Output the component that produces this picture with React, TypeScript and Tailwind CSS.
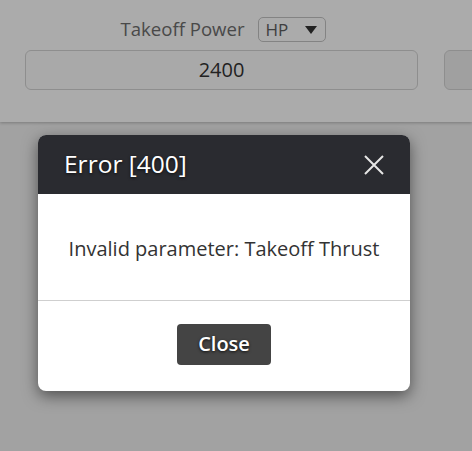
import React from "react";

export default function App() {
  return (
    <div className="relative w-[472px] h-[451px] overflow-hidden bg-[#f2f2f2] font-['Open_Sans',sans-serif]">
      <div className="h-[122px] bg-white shadow-[0_1px_3px_rgba(0,0,0,0.25)] pt-[17px] pl-[25px]">
        <div className="grid grid-cols-[393px_393px] gap-x-[26px]">
          <div className="flex flex-col">
            <div className="flex items-center justify-center gap-[13px] h-[25px] pl-[3px]">
              <span className="text-[18.6px] leading-none text-[#6e6e6e]">Takeoff Power</span>
              <div className="flex items-center justify-between w-[68px] h-[25px] border border-[#c4c4c4] rounded-[5px] pl-[7px] pr-[8px] text-[17px] text-[#5e5e5e]">
                <span className="leading-none">HP</span>
                <svg width="12" height="8" viewBox="0 0 12 8">
                  <path d="M0 0 L12 0 L6 8 Z" fill="#333" />
                </svg>
              </div>
            </div>
            <div className="mt-[8px] h-[40px] rounded-[6px] border border-[#d4d4d4] bg-[#fdfdfd] flex items-center justify-center text-[20px] text-[#333]">
              2400
            </div>
          </div>
          <div className="flex flex-col">
            <div className="h-[25px]" />
            <div className="mt-[8px] h-[40px] rounded-[6px] border border-[#d4d4d4] bg-[#efefef]" />
          </div>
        </div>
      </div>

      <div className="absolute inset-0 bg-black/[0.33]">
        <div className="absolute left-[38px] top-[135px] w-[372px] rounded-[8px] overflow-hidden bg-white shadow-[0_5px_15px_rgba(0,0,0,0.5)]">
          <div className="h-[59px] bg-[#2a2b30] flex items-center justify-between pl-[26px] pr-[26px]">
            <span className="text-[24.5px] text-white [text-shadow:0_1px_3px_rgba(0,0,0,0.7)]">Error [400]</span>
            <svg width="20" height="20" viewBox="0 0 20 20">
              <path d="M1 1 L19 19 M19 1 L1 19" stroke="#e6e6e6" strokeWidth="2" />
            </svg>
          </div>
          <div className="h-[107px] flex items-center justify-center border-b border-[#cfcfcf] pt-[4px]">
            <span className="text-[20px] text-[#333]">Invalid parameter: Takeoff Thrust</span>
          </div>
          <div className="h-[90px] flex items-center justify-center pb-[4px]">
            <button className="w-[94px] h-[41px] rounded-[4px] bg-[#444] text-white text-[20px] font-semibold [text-shadow:0_1px_3px_rgba(0,0,0,0.8)]">
              Close
            </button>
          </div>
        </div>
      </div>
    </div>
  );
}
